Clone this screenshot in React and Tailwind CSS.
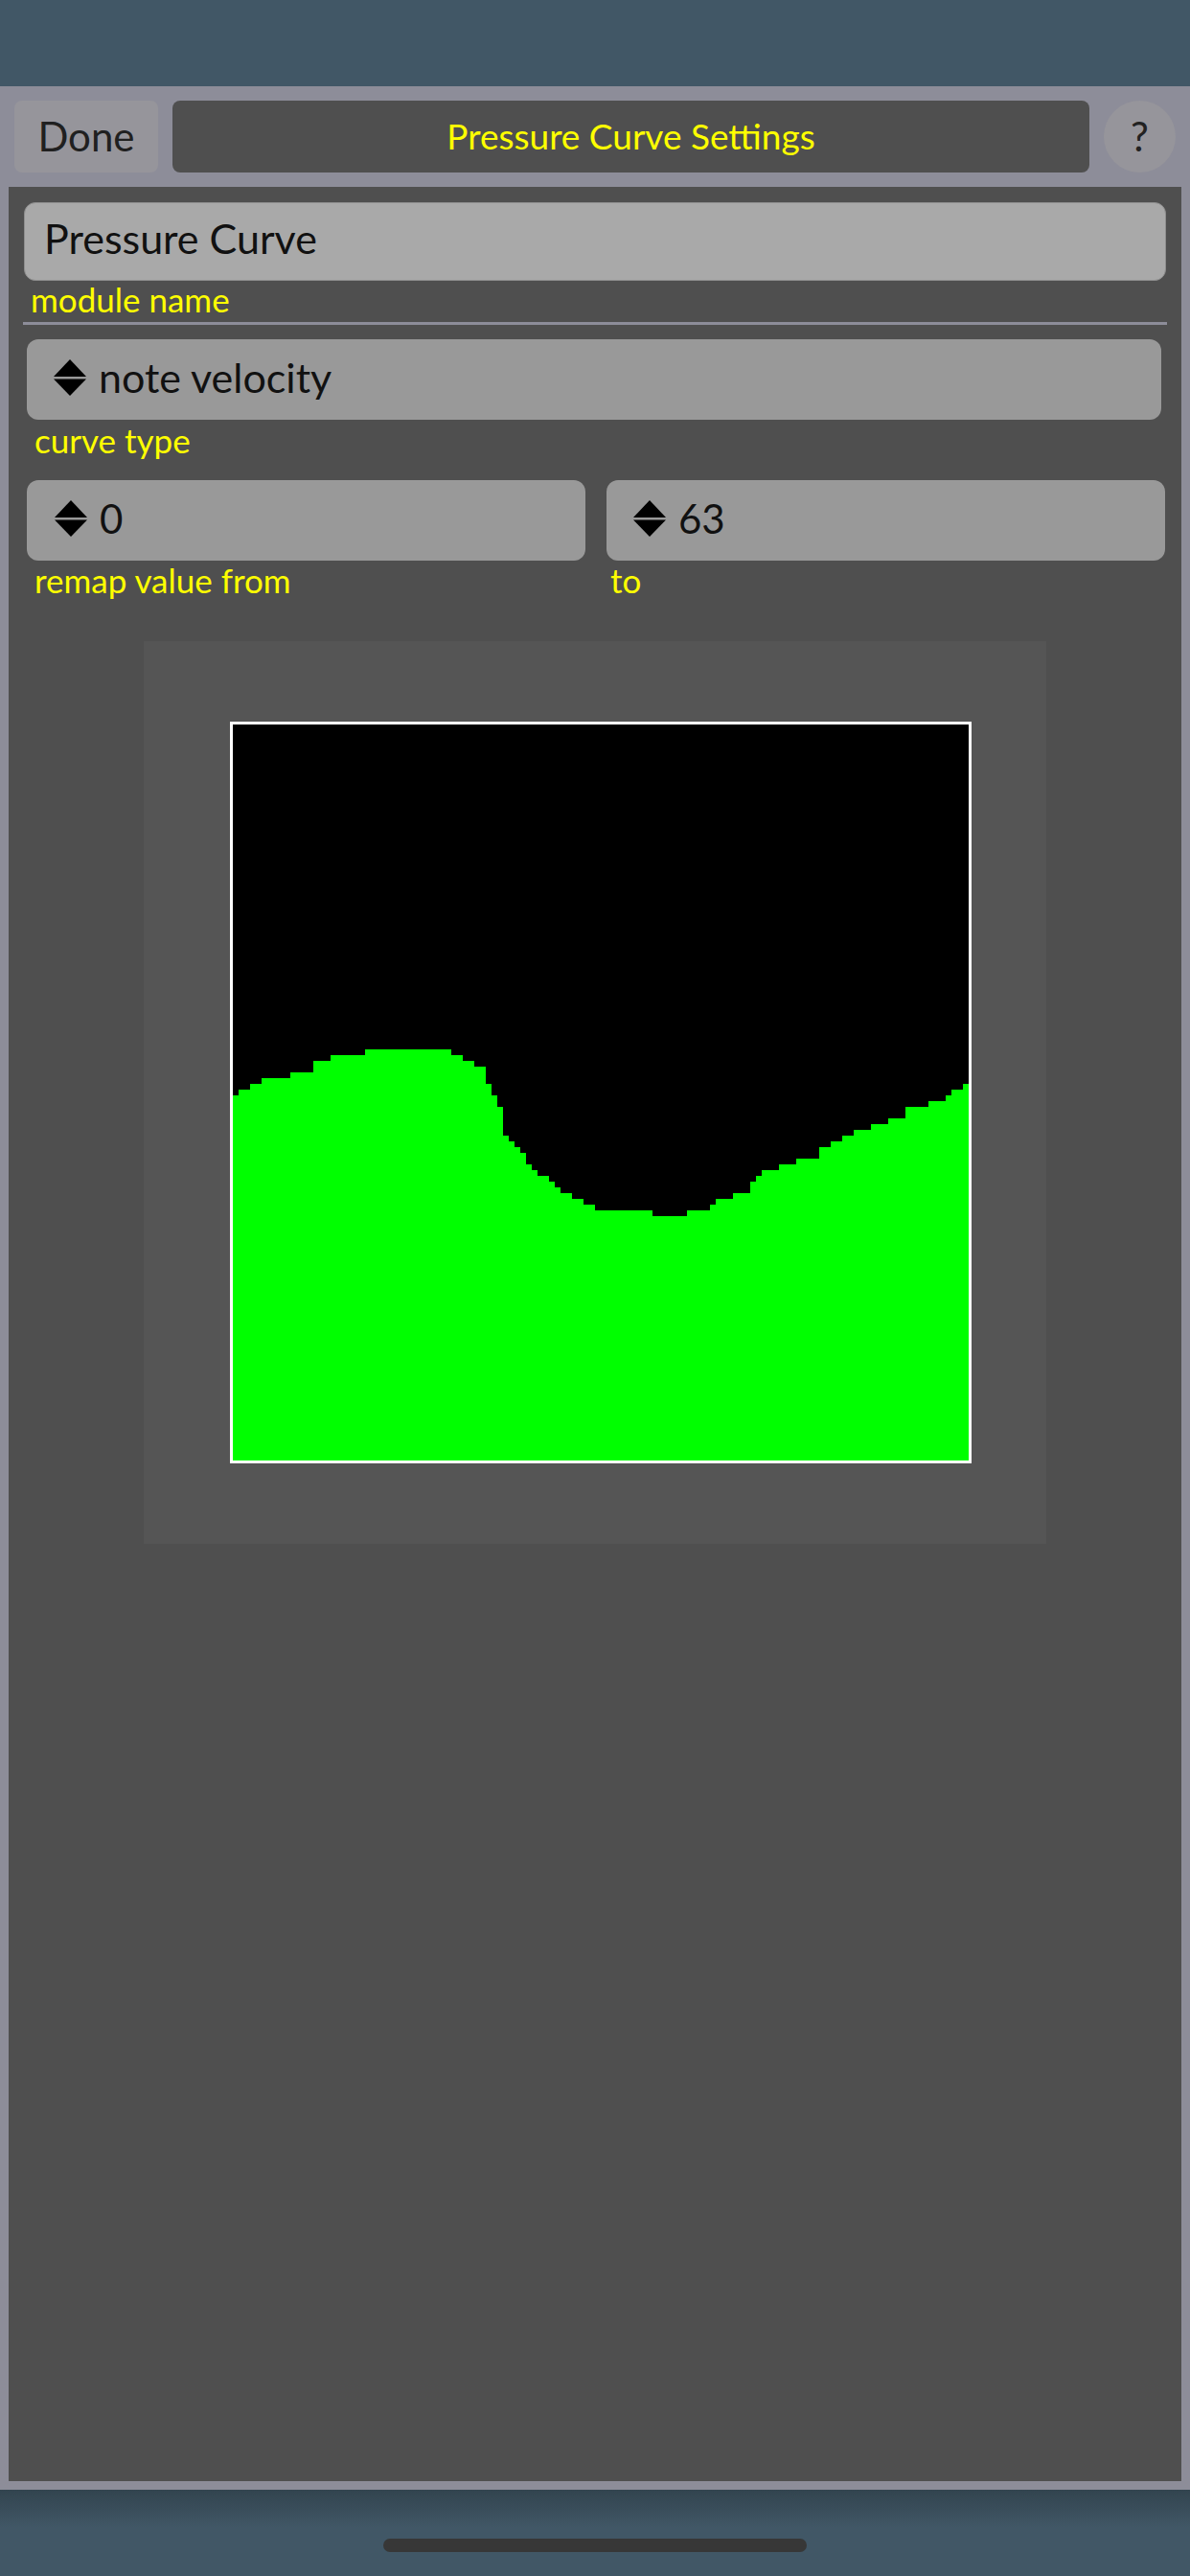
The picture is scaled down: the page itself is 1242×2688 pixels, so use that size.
import React from 'react';

// run-length columns of the curve: [row offset, column count]
const RUNS = [
  [0, 1], [-1, 2], [-2, 2], [-3, 5], [-4, 4], [-6, 3], [-7, 6], [-8, 15], [-7, 2], [-6, 2], [-5, 2],
  [-2, 1], [0, 1], [2, 1], [7, 1], [8, 1], [9, 1], [10, 1], [12, 1], [13, 1], [14, 2], [15, 1], [16, 1],
  [17, 2], [18, 2], [19, 2], [20, 10], [21, 6], [20, 4], [19, 1], [18, 3], [17, 3], [15, 1], [14, 1],
  [13, 3], [12, 3], [11, 4], [9, 2], [8, 2], [7, 2], [6, 3], [5, 3], [4, 3], [2, 4], [1, 3], [0, 1],
  [-1, 2], [-2, 1],
];

function curvePath() {
  let x = 0;
  let d = 'M0 768';
  RUNS.forEach(([n, count]) => {
    const y = 387 + n * 6;
    d += ` L${x} ${y} L${x + count * 6} ${y}`;
    x += count * 6;
  });
  return d + ' L768 768 Z';
}

function Arrows() {
  return (
    <svg width="34" height="38" viewBox="0 0 34 38" className="shrink-0">
      <path d="M0 18 L17 0 L34 18 Z" fill="#000" />
      <path d="M0 20.5 L34 20.5 L17 38 Z" fill="#000" />
    </svg>
  );
}

function Label({ children, className = '' }) {
  return <div className={`text-[35px] leading-[34px] text-[#ffff00] ${className}`}>{children}</div>;
}

export default function App() {
  const d = curvePath();

  return (
    <div className="flex h-[2688px] w-[1242px] flex-col bg-[#415766] font-['Lato','Noto_Sans',sans-serif]">
      <div className="h-[90px] shrink-0" />

      <div className="flex h-[2508px] shrink-0 flex-col bg-[#8d8d99]">
        <div className="flex h-[90px] shrink-0 items-end gap-[15px] px-[15px]">
          <button className="flex h-[75px] w-[150px] items-center justify-center rounded-[8px] bg-[#96959b] text-[42px] text-[#202020]">
            Done
          </button>
          <div className="flex h-[75px] flex-1 items-center justify-center rounded-[8px] bg-[#4f4f4f] pb-[2px] text-[37px] text-[#ffff00]">
            Pressure Curve Settings
          </div>
          <div className="flex h-[75px] w-[75px] items-center justify-center rounded-full bg-[#96959b] text-[42px] text-[#222]">
            ?
          </div>
        </div>

        <div className="mx-[9px] mt-[15px] flex h-[2394px] flex-col bg-[#4f4f4f]">
          <div className="ml-[16px] mt-[16px] flex h-[82px] w-[1192px] items-center rounded-[12px] border border-[#8f8f8f] bg-[#a9a9a9] pb-[6px] pl-[20px] text-[43px] text-[#111]">
            Pressure Curve
          </div>
          <Label className="ml-[23px] mt-[2px]">module name</Label>
          <div className="ml-[15px] mt-[7px] h-[3px] w-[1194px] bg-[#8d8d99]" />

          <div className="ml-[19px] mt-[15px] flex h-[84px] w-[1184px] items-center gap-[13px] rounded-[12px] bg-[#999999] pb-[4px] pl-[28px] text-[43px] text-[#111]">
            <Arrows />
            <span>note velocity</span>
          </div>
          <Label className="ml-[27px] mt-[4px]">curve type</Label>

          <div className="ml-[19px] mt-[25px] flex w-[1188px] gap-[22px]">
            <div className="flex flex-1 flex-col">
              <div className="flex h-[84px] items-center gap-[13px] rounded-[12px] bg-[#999999] pb-[4px] pl-[29px] text-[42px] text-[#111]">
                <Arrows />
                <span>0</span>
              </div>
              <Label className="ml-[8px] mt-[3px]">remap value from</Label>
            </div>
            <div className="flex flex-1 flex-col">
              <div className="flex h-[84px] items-center gap-[13px] rounded-[12px] bg-[#999999] pb-[4px] pl-[28px] text-[42px] text-[#111]">
                <Arrows />
                <span>63</span>
              </div>
              <Label className="ml-[4px] mt-[3px]">to</Label>
            </div>
          </div>

          <div className="ml-[141px] mt-[47px] h-[942px] w-[942px] bg-[#555555] pl-[90px] pt-[84px]">
            <div className="h-[774px] w-[774px] border-[3px] border-white bg-black">
              <svg width="768" height="768" viewBox="0 0 768 768" className="block" shapeRendering="crispEdges">
                <path d={d} fill="#00ff00" />
              </svg>
            </div>
          </div>
        </div>
      </div>

      <div className="flex flex-1 justify-center bg-[linear-gradient(to_bottom,#32444f_0px,#415766_40px)] pt-[51px]">
        <div className="h-[14px] w-[442px] rounded-full bg-[#373737]" />
      </div>
    </div>
  );
}
